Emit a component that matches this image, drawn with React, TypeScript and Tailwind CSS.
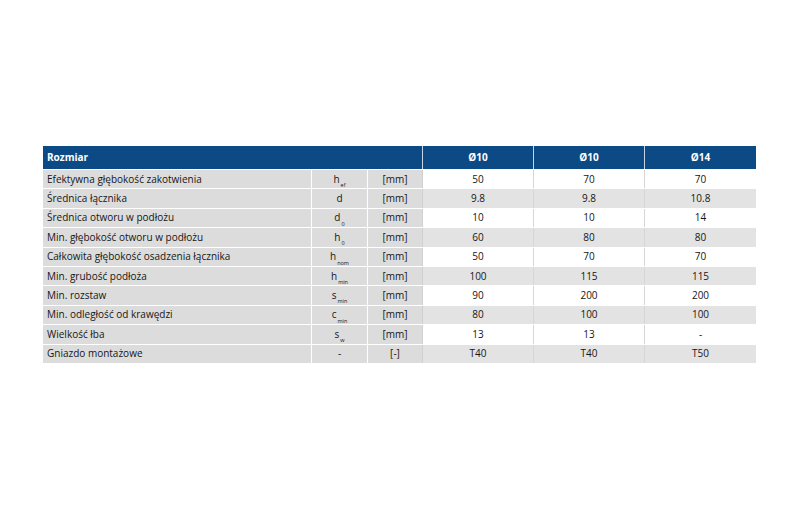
import React from "react";

type Row = { label: string; sym: string; sub: string; unit: string; v: [string, string, string] };

const rows: Row[] = [
  { label: "Efektywna głębokość zakotwienia", sym: "h", sub: "ef", unit: "[mm]", v: ["50", "70", "70"] },
  { label: "Średnica łącznika", sym: "d", sub: "", unit: "[mm]", v: ["9.8", "9.8", "10.8"] },
  { label: "Średnica otworu w podłożu", sym: "d", sub: "0", unit: "[mm]", v: ["10", "10", "14"] },
  { label: "Min. głębokość otworu w podłożu", sym: "h", sub: "0", unit: "[mm]", v: ["60", "80", "80"] },
  { label: "Całkowita głębokość osadzenia łącznika", sym: "h", sub: "nom", unit: "[mm]", v: ["50", "70", "70"] },
  { label: "Min. grubość podłoża", sym: "h", sub: "min", unit: "[mm]", v: ["100", "115", "115"] },
  { label: "Min. rozstaw", sym: "s", sub: "min", unit: "[mm]", v: ["90", "200", "200"] },
  { label: "Min. odległość od krawędzi", sym: "c", sub: "min", unit: "[mm]", v: ["80", "100", "100"] },
  { label: "Wielkość łba", sym: "s", sub: "w", unit: "[mm]", v: ["13", "13", "-"] },
  { label: "Gniazdo montażowe", sym: "-", sub: "", unit: "[-]", v: ["T40", "T40", "T50"] },
];

export default function App() {
  return (
    <div
      className="w-[800px] h-[528px] bg-white pt-[146px] pl-[43px] text-[#161616]"
      style={{ fontFamily: "'Open Sans', 'Noto Sans', sans-serif" }}
    >
      <div className="w-[713px] text-[10px]">
        <div className="flex h-[23px] bg-[#0c4a85] text-white font-bold">
          <div className="w-[380px] flex items-center pl-[4px] border-r border-[#c8d4e3]">Rozmiar</div>
          <div className="w-[111px] flex items-center justify-center border-r border-[#c8d4e3]">Ø10</div>
          <div className="w-[111px] flex items-center justify-center border-r border-[#c8d4e3]">Ø10</div>
          <div className="w-[111px] flex items-center justify-center">Ø14</div>
        </div>
        {rows.map((r, i) => {
          const valBg = i % 2 === 0 ? "bg-white" : "bg-[#e3e3e3]";
          return (
            <div key={i} className="flex h-[19.4px] border-t border-white">
              <div className="w-[269px] bg-[#dcdcdc] flex items-center pl-[4px] border-r border-white">{r.label}</div>
              <div className="w-[56px] bg-[#dcdcdc] flex items-center justify-center border-r border-white">
                <span>
                  {r.sym}
                  {r.sub && <sub className="text-[5.5px] align-[-3px] ml-[1px]">{r.sub}</sub>}
                </span>
              </div>
              <div className="w-[55px] bg-[#dcdcdc] flex items-center justify-center border-r border-[#d0d0d0]">{r.unit}</div>
              <div className={`w-[111px] ${valBg} flex items-center justify-center border-r border-[#d6d6d6]`}>{r.v[0]}</div>
              <div className={`w-[111px] ${valBg} flex items-center justify-center border-r border-[#d6d6d6]`}>{r.v[1]}</div>
              <div className={`w-[111px] ${valBg} flex items-center justify-center`}>{r.v[2]}</div>
            </div>
          );
        })}
      </div>
    </div>
  );
}
